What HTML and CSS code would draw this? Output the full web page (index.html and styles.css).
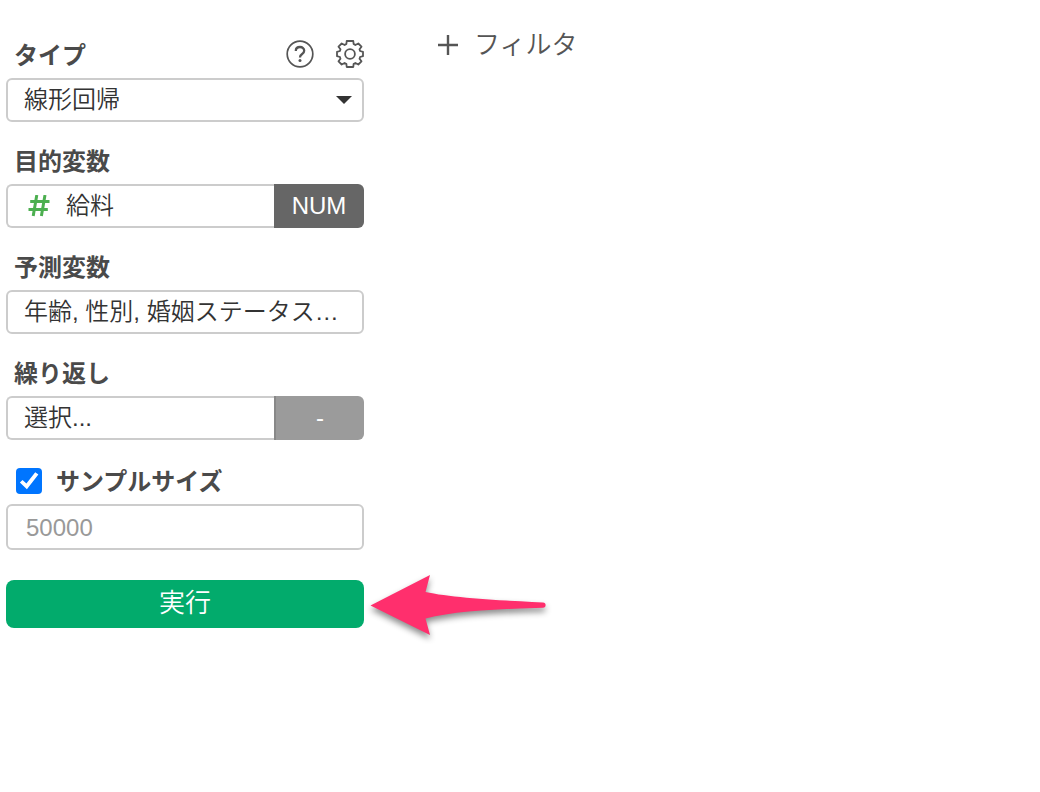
FILE: index.html
```html
<!DOCTYPE html>
<html lang="ja">
<head>
    <meta charset="UTF-8">
    <meta name="viewport" content="width=device-width, initial-scale=1.0">
    <title>線形回帰</title>
    <link rel="stylesheet" href="styles.css">
</head>
<body>
    <div class="container">
        <form class="settings">
            <div class="form-group">
                <div class="label-row">
                    <label for="type">タイプ</label>
                    <div class="tools">
                        <button type="button" class="icon-btn" aria-label="ヘルプ">
                            <svg width="28" height="28" viewBox="0 0 28 28" fill="none" stroke="#555" stroke-width="1.7">
                                <circle cx="14" cy="14" r="12.8"/>
                                <path d="M9.8 10.9C9.8 8.4 11.6 7 14 7s4.2 1.5 4.2 3.7c0 1.8-1 2.7-2.3 3.6-1.3.9-1.9 1.5-1.9 3.2" stroke-width="2.3"/>
                                <circle cx="14" cy="20.4" r="1.5" fill="#555" stroke="none"/>
                            </svg>
                        </button>
                        <button type="button" class="icon-btn" aria-label="設定">
                            <svg width="28" height="28" viewBox="0 0 28 28" fill="none" stroke="#555" stroke-width="1.8" stroke-linejoin="round">
                                <path d="M10.7 1h6.6l.3 3q1 .2 1.800 1l2.900-1.500 3.200 3.200L23.500 9.300q.5 1 .5 1.700l3 .8v4.400l-3 .8q0 1-.5 1.700l2 2.600-3.200 3.200-2.900-1.500q-.8.800-1.800 1l-.3 3h-6.600l-.3-3q-1-.2-1.800-1l-2.900 1.500-3.200-3.200 2-2.600Q4 18 4 17l-3-.8v-4.400l3-.8q0-.7.5-1.700l-2-2.600 3.200-3.200L8.600 5q.8-.8 1.800-1z"/>
                                <circle cx="14" cy="14" r="4.9"/>
                            </svg>
                        </button>
                    </div>
                </div>
                <div class="select-wrap">
                    <select id="type" class="field">
                        <option>線形回帰</option>
                    </select>
                </div>
            </div>

            <div class="form-group">
                <div class="label-row"><label for="target">目的変数</label></div>
                <div class="input-group">
                    <button type="button" id="target" class="field">
                        <svg class="hash" width="22" height="22" viewBox="0 0 22 22" fill="none" stroke="#4caf50" stroke-width="3">
                            <path d="M8.8 0 5.2 21M17 0l-3.6 21M2.2 6.5H21.5M.5 14.5H19.8"/>
                        </svg>
                        給料
                    </button>
                    <button type="button" class="addon">NUM</button>
                </div>
            </div>

            <div class="form-group">
                <div class="label-row"><label for="predictors">予測変数</label></div>
                <button type="button" id="predictors" class="field">年齢, 性別, 婚姻ステータス…</button>
            </div>

            <div class="form-group">
                <div class="label-row"><label for="repeat">繰り返し</label></div>
                <div class="input-group">
                    <button type="button" id="repeat" class="field">選択...</button>
                    <button type="button" class="addon addon-empty">-</button>
                </div>
            </div>

            <div class="form-group sample">
                <div class="label-row">
                    <input type="checkbox" id="use-sample" class="check" checked>
                    <label for="use-sample">サンプルサイズ</label>
                </div>
                <input type="text" class="field" placeholder="50000" aria-label="サンプルサイズ">
            </div>

            <div class="run">
                <button type="button" class="btn-run">実行</button>
                <svg class="arrow" width="180" height="68" viewBox="0 0 180 68">
                    <path fill="#ff2f6d" d="M.5 31.5 60 1l-4.5 17C80 23.5 130 26.5 173 28.5a2.6 2.6 0 0 1 0 5.2C130 35 85 36.5 55.5 44.500L60 61z"/>
                </svg>
            </div>
        </form>

        <main class="content">
            <button type="button" class="add-filter">
                <svg width="20" height="20" viewBox="0 0 20 20" stroke="#555" stroke-width="2.4">
                    <path d="M10 0v20M0 10h20"/>
                </svg>
                フィルタ
            </button>
        </main>
    </div>
</body>
</html>
```

FILE: styles.css
```css
* {
    margin: 0;
    padding: 0;
    box-sizing: border-box;
}

body {
    font-family: "Liberation Sans", "Noto Sans CJK JP", sans-serif;
    font-size: 24px;
    font-weight: 350;
    line-height: 34px;
    color: #333;
    background: #fff;
}

button, input, select {
    font: inherit;
    color: inherit;
}

button {
    border: none;
    background: none;
    cursor: pointer;
}

.container {
    display: flex;
    gap: 74px;
    padding: 16px 6px;
}

.settings {
    flex: 0 0 358px;
}

.form-group {
    padding-top: 22px;
}

.label-row {
    display: flex;
    align-items: center;
    height: 34px;
    margin-bottom: 6px;
    padding-left: 8px;
}

.label-row label {
    padding-top: 2px;
    font-weight: 600;
    color: #4a4a4a;
}

.tools {
    display: flex;
    gap: 22px;
    margin-left: auto;
    padding-bottom: 2px;
}

.icon-btn {
    display: flex;
}

.field {
    display: flex;
    align-items: center;
    width: 100%;
    height: 44px;
    padding: 0 16px;
    border: 2px solid #ccc;
    border-radius: 6px;
    background: #fff;
    text-align: left;
    white-space: nowrap;
}

.select-wrap {
    position: relative;
}

.select-wrap select {
    appearance: none;
}

.select-wrap::after {
    content: "";
    position: absolute;
    top: 18px;
    right: 12px;
    border: 8px solid transparent;
    border-top-color: #333;
    border-bottom: none;
    pointer-events: none;
}

.input-group {
    display: flex;
}

.input-group .field {
    flex: 1;
    border-right: none;
    border-radius: 6px 0 0 6px;
}

.hash {
    margin: 0 16px 0 4px;
}

.addon {
    width: 90px;
    border-radius: 0 6px 6px 0;
    background: #666;
    color: #fff;
}

.addon-empty {
    border-left: 2px solid #888;
    background: #9b9b9b;
}

.sample {
    padding-top: 24px;
}

.check {
    appearance: none;
    width: 26px;
    height: 26px;
    margin: 0 14px 0 2px;
    border-radius: 4px;
    background: #0075ff;
}

.check:checked::before {
    content: "";
    display: block;
    width: 26px;
    height: 26px;
    background: #fff;
    clip-path: polygon(15% 56%, 25% 46%, 40% 60%, 74% 16%, 86% 25%, 42% 82%);
}

.sample .field {
    height: 46px;
    padding: 2px 18px 0;
}

.field::placeholder {
    color: #999;
}

.run {
    position: relative;
    margin-top: 30px;
}

.btn-run {
    width: 100%;
    height: 48px;
    padding-bottom: 2px;
    border-radius: 8px;
    background: #02ab6c;
    color: #fff;
    font-size: 26px;
}

.arrow {
    position: absolute;
    top: -6px;
    left: calc(100% + 6px);
    overflow: visible;
    filter: drop-shadow(0 4px 3px rgba(0, 0, 0, 0.45));
}

.content {
    flex: 1;
    padding-top: 12px;
}

.add-filter {
    display: flex;
    align-items: center;
    gap: 16px;
    color: #555;
    font-size: 26px;
}
```
